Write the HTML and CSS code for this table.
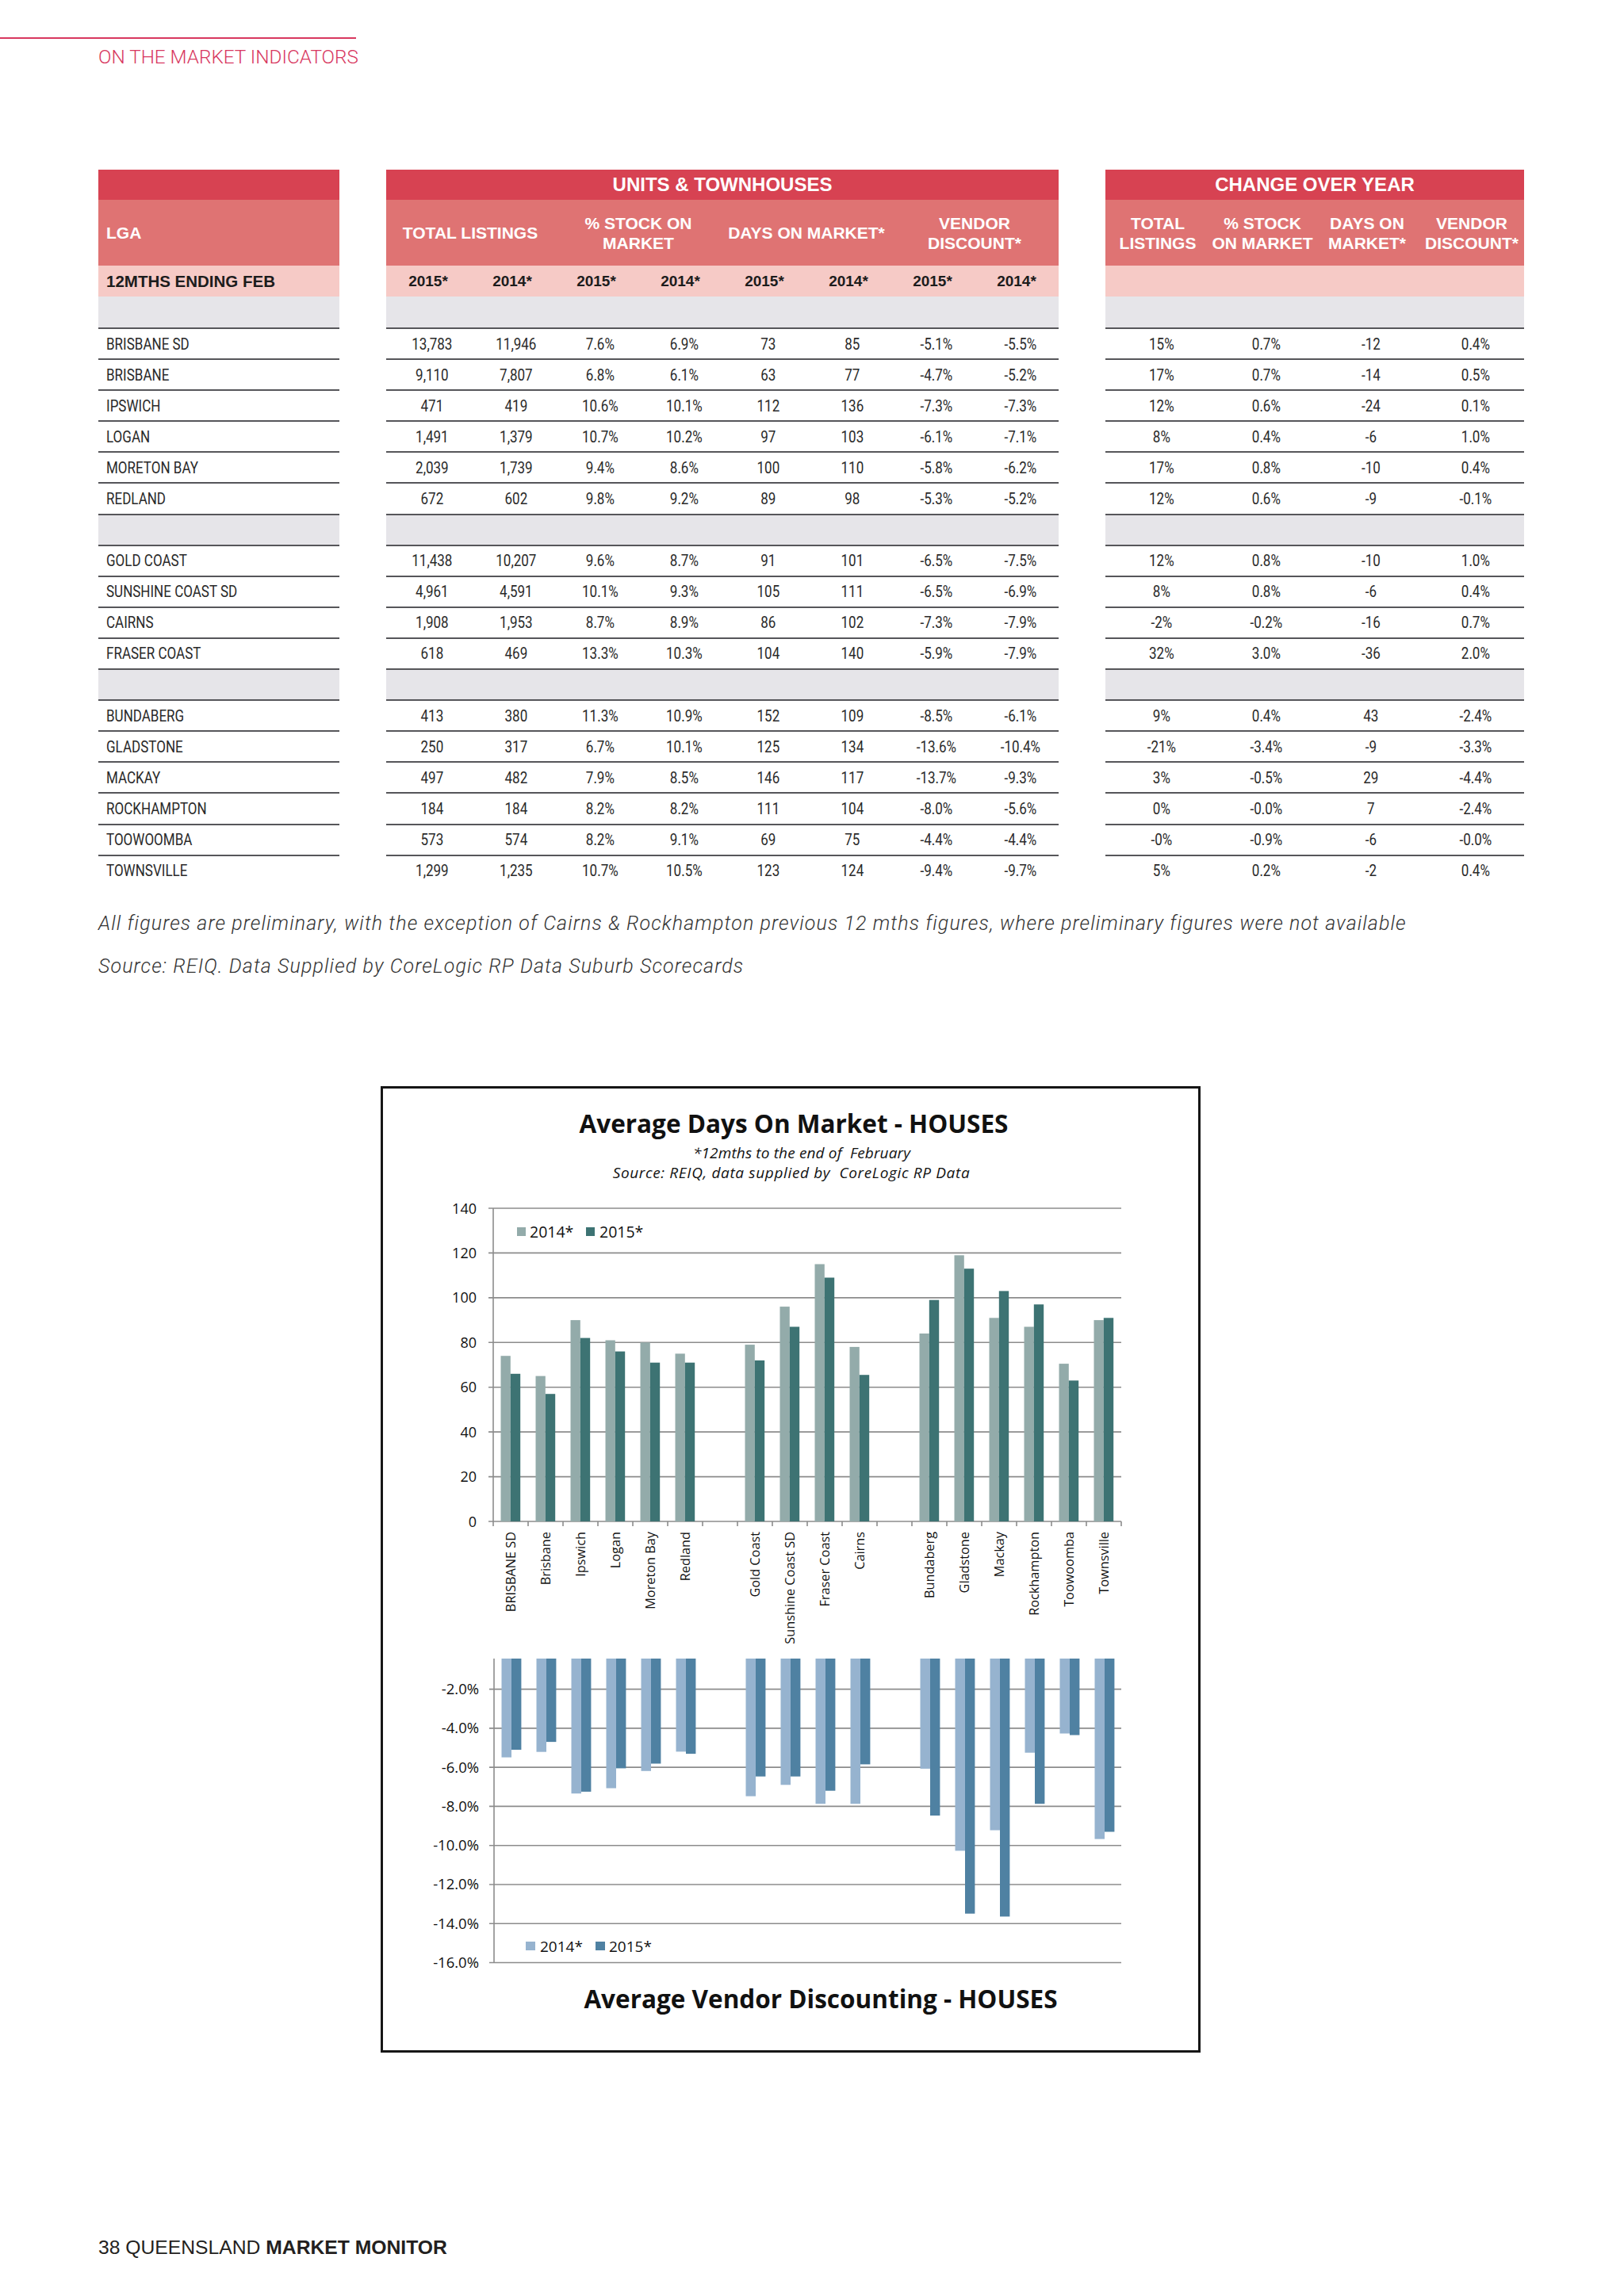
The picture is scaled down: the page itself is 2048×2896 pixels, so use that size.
FILE: index.html
```html
<!DOCTYPE html>
<html>
<head>
<meta charset="utf-8">
<title>On the Market Indicators</title>
<link rel="stylesheet" href="styles.css">
</head>
<body>
<div class="page">
  <div class="topline"></div>
  <div class="kicker">ON THE MARKET INDICATORS</div>

  <div class="tables">
    <div class="tbl t-left">
      <div class="band1"></div>
      <div class="band2 lga">LGA</div>
      <div class="band3 lga-sub">12MTHS ENDING FEB</div>
      <div class="band4"></div>
      <div class="row"><span>BRISBANE SD</span></div>
      <div class="row"><span>BRISBANE</span></div>
      <div class="row"><span>IPSWICH</span></div>
      <div class="row"><span>LOGAN</span></div>
      <div class="row"><span>MORETON BAY</span></div>
      <div class="row"><span>REDLAND</span></div>
      <div class="row sep"></div>
      <div class="row"><span>GOLD COAST</span></div>
      <div class="row"><span>SUNSHINE COAST SD</span></div>
      <div class="row"><span>CAIRNS</span></div>
      <div class="row"><span>FRASER COAST</span></div>
      <div class="row sep"></div>
      <div class="row"><span>BUNDABERG</span></div>
      <div class="row"><span>GLADSTONE</span></div>
      <div class="row"><span>MACKAY</span></div>
      <div class="row"><span>ROCKHAMPTON</span></div>
      <div class="row"><span>TOOWOOMBA</span></div>
      <div class="row"><span>TOWNSVILLE</span></div>
    </div>

    <div class="tbl t-mid">
      <div class="band1">UNITS &amp; TOWNHOUSES</div>
      <div class="band2 cols4"><div>TOTAL LISTINGS</div><div>% STOCK ON<br>MARKET</div><div>DAYS ON MARKET*</div><div>VENDOR<br>DISCOUNT*</div></div>
      <div class="band3 cols8 years"><span>2015*</span><span>2014*</span><span>2015*</span><span>2014*</span><span>2015*</span><span>2014*</span><span>2015*</span><span>2014*</span></div>
      <div class="band4"></div>
      <div class="row cols8"><span>13,783</span><span>11,946</span><span>7.6%</span><span>6.9%</span><span>73</span><span>85</span><span>-5.1%</span><span>-5.5%</span></div>
      <div class="row cols8"><span>9,110</span><span>7,807</span><span>6.8%</span><span>6.1%</span><span>63</span><span>77</span><span>-4.7%</span><span>-5.2%</span></div>
      <div class="row cols8"><span>471</span><span>419</span><span>10.6%</span><span>10.1%</span><span>112</span><span>136</span><span>-7.3%</span><span>-7.3%</span></div>
      <div class="row cols8"><span>1,491</span><span>1,379</span><span>10.7%</span><span>10.2%</span><span>97</span><span>103</span><span>-6.1%</span><span>-7.1%</span></div>
      <div class="row cols8"><span>2,039</span><span>1,739</span><span>9.4%</span><span>8.6%</span><span>100</span><span>110</span><span>-5.8%</span><span>-6.2%</span></div>
      <div class="row cols8"><span>672</span><span>602</span><span>9.8%</span><span>9.2%</span><span>89</span><span>98</span><span>-5.3%</span><span>-5.2%</span></div>
      <div class="row sep"></div>
      <div class="row cols8"><span>11,438</span><span>10,207</span><span>9.6%</span><span>8.7%</span><span>91</span><span>101</span><span>-6.5%</span><span>-7.5%</span></div>
      <div class="row cols8"><span>4,961</span><span>4,591</span><span>10.1%</span><span>9.3%</span><span>105</span><span>111</span><span>-6.5%</span><span>-6.9%</span></div>
      <div class="row cols8"><span>1,908</span><span>1,953</span><span>8.7%</span><span>8.9%</span><span>86</span><span>102</span><span>-7.3%</span><span>-7.9%</span></div>
      <div class="row cols8"><span>618</span><span>469</span><span>13.3%</span><span>10.3%</span><span>104</span><span>140</span><span>-5.9%</span><span>-7.9%</span></div>
      <div class="row sep"></div>
      <div class="row cols8"><span>413</span><span>380</span><span>11.3%</span><span>10.9%</span><span>152</span><span>109</span><span>-8.5%</span><span>-6.1%</span></div>
      <div class="row cols8"><span>250</span><span>317</span><span>6.7%</span><span>10.1%</span><span>125</span><span>134</span><span>-13.6%</span><span>-10.4%</span></div>
      <div class="row cols8"><span>497</span><span>482</span><span>7.9%</span><span>8.5%</span><span>146</span><span>117</span><span>-13.7%</span><span>-9.3%</span></div>
      <div class="row cols8"><span>184</span><span>184</span><span>8.2%</span><span>8.2%</span><span>111</span><span>104</span><span>-8.0%</span><span>-5.6%</span></div>
      <div class="row cols8"><span>573</span><span>574</span><span>8.2%</span><span>9.1%</span><span>69</span><span>75</span><span>-4.4%</span><span>-4.4%</span></div>
      <div class="row cols8"><span>1,299</span><span>1,235</span><span>10.7%</span><span>10.5%</span><span>123</span><span>124</span><span>-9.4%</span><span>-9.7%</span></div>
    </div>

    <div class="tbl t-right">
      <div class="band1">CHANGE OVER YEAR</div>
      <div class="band2 cols4"><div>TOTAL<br>LISTINGS</div><div>% STOCK<br>ON MARKET</div><div>DAYS ON<br>MARKET*</div><div>VENDOR<br>DISCOUNT*</div></div>
      <div class="band3"></div>
      <div class="band4"></div>
      <div class="row cols4"><span>15%</span><span>0.7%</span><span>-12</span><span>0.4%</span></div>
      <div class="row cols4"><span>17%</span><span>0.7%</span><span>-14</span><span>0.5%</span></div>
      <div class="row cols4"><span>12%</span><span>0.6%</span><span>-24</span><span>0.1%</span></div>
      <div class="row cols4"><span>8%</span><span>0.4%</span><span>-6</span><span>1.0%</span></div>
      <div class="row cols4"><span>17%</span><span>0.8%</span><span>-10</span><span>0.4%</span></div>
      <div class="row cols4"><span>12%</span><span>0.6%</span><span>-9</span><span>-0.1%</span></div>
      <div class="row sep"></div>
      <div class="row cols4"><span>12%</span><span>0.8%</span><span>-10</span><span>1.0%</span></div>
      <div class="row cols4"><span>8%</span><span>0.8%</span><span>-6</span><span>0.4%</span></div>
      <div class="row cols4"><span>-2%</span><span>-0.2%</span><span>-16</span><span>0.7%</span></div>
      <div class="row cols4"><span>32%</span><span>3.0%</span><span>-36</span><span>2.0%</span></div>
      <div class="row sep"></div>
      <div class="row cols4"><span>9%</span><span>0.4%</span><span>43</span><span>-2.4%</span></div>
      <div class="row cols4"><span>-21%</span><span>-3.4%</span><span>-9</span><span>-3.3%</span></div>
      <div class="row cols4"><span>3%</span><span>-0.5%</span><span>29</span><span>-4.4%</span></div>
      <div class="row cols4"><span>0%</span><span>-0.0%</span><span>7</span><span>-2.4%</span></div>
      <div class="row cols4"><span>-0%</span><span>-0.9%</span><span>-6</span><span>-0.0%</span></div>
      <div class="row cols4"><span>5%</span><span>0.2%</span><span>-2</span><span>0.4%</span></div>
    </div>
  </div>

  <p class="note first">All figures are preliminary, with the exception of Cairns &amp; Rockhampton previous 12 mths figures, where preliminary figures were not available</p>
  <p class="note">Source: REIQ. Data Supplied by CoreLogic RP Data Suburb Scorecards</p>

  <div class="chart">
    <svg class="chart-svg" width="1028" height="1213" viewBox="0 0 1028 1213" xmlns="http://www.w3.org/2000/svg">
      <g transform="translate(-483,-1373)">
        <!-- Days on market -->
        <text class="c-title" x="1001" y="1429" text-anchor="middle">Average Days On Market - HOUSES</text>
        <text class="c-sub" x="1011" y="1461" text-anchor="middle">*12mths to the end of&#160; February</text>
        <text class="c-sub c-sub2" x="998" y="1486" text-anchor="middle">Source: REIQ, data supplied by&#160; CoreLogic RP Data</text>

        <g class="grid">
          <line x1="616" y1="1524" x2="1414" y2="1524"/>
          <line x1="616" y1="1580.4" x2="1414" y2="1580.4"/>
          <line x1="616" y1="1636.9" x2="1414" y2="1636.9"/>
          <line x1="616" y1="1693.3" x2="1414" y2="1693.3"/>
          <line x1="616" y1="1749.7" x2="1414" y2="1749.7"/>
          <line x1="616" y1="1806.1" x2="1414" y2="1806.1"/>
          <line x1="616" y1="1862.6" x2="1414" y2="1862.6"/>
          <line x1="616" y1="1919" x2="1414" y2="1919"/>
          <line x1="622" y1="1524" x2="622" y2="1925"/>
          <line x1="666" y1="1919" x2="666" y2="1925"/>
          <line x1="710" y1="1919" x2="710" y2="1925"/>
          <line x1="754" y1="1919" x2="754" y2="1925"/>
          <line x1="798" y1="1919" x2="798" y2="1925"/>
          <line x1="842" y1="1919" x2="842" y2="1925"/>
          <line x1="886" y1="1919" x2="886" y2="1925"/>
          <line x1="930" y1="1919" x2="930" y2="1925"/>
          <line x1="974" y1="1919" x2="974" y2="1925"/>
          <line x1="1018" y1="1919" x2="1018" y2="1925"/>
          <line x1="1062" y1="1919" x2="1062" y2="1925"/>
          <line x1="1106" y1="1919" x2="1106" y2="1925"/>
          <line x1="1150" y1="1919" x2="1150" y2="1925"/>
          <line x1="1194" y1="1919" x2="1194" y2="1925"/>
          <line x1="1238" y1="1919" x2="1238" y2="1925"/>
          <line x1="1282" y1="1919" x2="1282" y2="1925"/>
          <line x1="1326" y1="1919" x2="1326" y2="1925"/>
          <line x1="1370" y1="1919" x2="1370" y2="1925"/>
          <line x1="1414" y1="1919" x2="1414" y2="1925"/>
        </g>
        <g class="ylab" text-anchor="end">
          <text x="601" y="1530.5">140</text>
          <text x="601" y="1586.9">120</text>
          <text x="601" y="1643.4">100</text>
          <text x="601" y="1699.8">80</text>
          <text x="601" y="1756.2">60</text>
          <text x="601" y="1812.6">40</text>
          <text x="601" y="1869.1">20</text>
          <text x="601" y="1925.5">0</text>
        </g>
        <rect class="d14" x="652" y="1548" width="11" height="11"/>
        <text class="leg" x="668" y="1560.5">2014*</text>
        <rect class="d15" x="739" y="1548" width="11" height="11"/>
        <text class="leg" x="756" y="1560.5">2015*</text>

        <g transform="translate(622,0)"><rect class="d14" x="9.5" y="1710.2" width="12.3" height="208.8"/><rect class="d15" x="21.8" y="1732.8" width="12.4" height="186.2"/></g>
        <g transform="translate(666,0)"><rect class="d14" x="9.5" y="1735.6" width="12.3" height="183.4"/><rect class="d15" x="21.8" y="1758.2" width="12.4" height="160.8"/></g>
        <g transform="translate(710,0)"><rect class="d14" x="9.5" y="1665.1" width="12.3" height="253.9"/><rect class="d15" x="21.8" y="1687.6" width="12.4" height="231.4"/></g>
        <g transform="translate(754,0)"><rect class="d14" x="9.5" y="1690.5" width="12.3" height="228.5"/><rect class="d15" x="21.8" y="1704.6" width="12.4" height="214.4"/></g>
        <g transform="translate(798,0)"><rect class="d14" x="9.5" y="1693.3" width="12.3" height="225.7"/><rect class="d15" x="21.8" y="1718.7" width="12.4" height="200.3"/></g>
        <g transform="translate(842,0)"><rect class="d14" x="9.5" y="1707.4" width="12.3" height="211.6"/><rect class="d15" x="21.8" y="1718.7" width="12.4" height="200.3"/></g>
        <g transform="translate(930,0)"><rect class="d14" x="9.5" y="1696.1" width="12.3" height="222.9"/><rect class="d15" x="21.8" y="1715.9" width="12.4" height="203.1"/></g>
        <g transform="translate(974,0)"><rect class="d14" x="9.5" y="1648.1" width="12.3" height="270.9"/><rect class="d15" x="21.8" y="1673.5" width="12.4" height="245.5"/></g>
        <g transform="translate(1018,0)"><rect class="d14" x="9.5" y="1594.5" width="12.3" height="324.5"/><rect class="d15" x="21.8" y="1611.5" width="12.4" height="307.5"/></g>
        <g transform="translate(1062,0)"><rect class="d14" x="9.5" y="1698.9" width="12.3" height="220.1"/><rect class="d15" x="21.8" y="1734.2" width="12.4" height="184.8"/></g>
        <g transform="translate(1150,0)"><rect class="d14" x="9.5" y="1682.0" width="12.3" height="237.0"/><rect class="d15" x="21.8" y="1639.7" width="12.4" height="279.3"/></g>
        <g transform="translate(1194,0)"><rect class="d14" x="9.5" y="1583.3" width="12.3" height="335.7"/><rect class="d15" x="21.8" y="1600.2" width="12.4" height="318.8"/></g>
        <g transform="translate(1238,0)"><rect class="d14" x="9.5" y="1662.3" width="12.3" height="256.7"/><rect class="d15" x="21.8" y="1628.4" width="12.4" height="290.6"/></g>
        <g transform="translate(1282,0)"><rect class="d14" x="9.5" y="1673.5" width="12.3" height="245.5"/><rect class="d15" x="21.8" y="1645.3" width="12.4" height="273.7"/></g>
        <g transform="translate(1326,0)"><rect class="d14" x="9.5" y="1720.1" width="12.3" height="198.9"/><rect class="d15" x="21.8" y="1741.3" width="12.4" height="177.7"/></g>
        <g transform="translate(1370,0)"><rect class="d14" x="9.5" y="1665.1" width="12.3" height="253.9"/><rect class="d15" x="21.8" y="1662.3" width="12.4" height="256.7"/></g>

        <g class="xlab" text-anchor="end">
          <text transform="translate(650,1932) rotate(-90)">BRISBANE SD</text>
          <text transform="translate(694,1932) rotate(-90)">Brisbane</text>
          <text transform="translate(738,1932) rotate(-90)">Ipswich</text>
          <text transform="translate(782,1932) rotate(-90)">Logan</text>
          <text transform="translate(826,1932) rotate(-90)">Moreton Bay</text>
          <text transform="translate(870,1932) rotate(-90)">Redland</text>
          <text transform="translate(958,1932) rotate(-90)">Gold Coast</text>
          <text transform="translate(1002,1932) rotate(-90)">Sunshine Coast SD</text>
          <text transform="translate(1046,1932) rotate(-90)">Fraser Coast</text>
          <text transform="translate(1090,1932) rotate(-90)">Cairns</text>
          <text transform="translate(1178,1932) rotate(-90)">Bundaberg</text>
          <text transform="translate(1222,1932) rotate(-90)">Gladstone</text>
          <text transform="translate(1266,1932) rotate(-90)">Mackay</text>
          <text transform="translate(1310,1932) rotate(-90)">Rockhampton</text>
          <text transform="translate(1354,1932) rotate(-90)">Toowoomba</text>
          <text transform="translate(1398,1932) rotate(-90)">Townsville</text>
        </g>

        <!-- Vendor discounting -->
        <g class="grid">
          <line x1="617" y1="2130.6" x2="1414" y2="2130.6"/>
          <line x1="617" y1="2179.9" x2="1414" y2="2179.9"/>
          <line x1="617" y1="2229.1" x2="1414" y2="2229.1"/>
          <line x1="617" y1="2278.4" x2="1414" y2="2278.4"/>
          <line x1="617" y1="2327.7" x2="1414" y2="2327.7"/>
          <line x1="617" y1="2377.0" x2="1414" y2="2377.0"/>
          <line x1="617" y1="2426.2" x2="1414" y2="2426.2"/>
          <line x1="617" y1="2475.5" x2="1414" y2="2475.5"/>
          <line x1="623" y1="2092" x2="623" y2="2475.5"/>
        </g>
        <g class="ylab2" text-anchor="end">
          <text x="604" y="2137">-2.0%</text>
          <text x="604" y="2186.3">-4.0%</text>
          <text x="604" y="2235.5">-6.0%</text>
          <text x="604" y="2284.8">-8.0%</text>
          <text x="604" y="2334.1">-10.0%</text>
          <text x="604" y="2383.4">-12.0%</text>
          <text x="604" y="2432.6">-14.0%</text>
          <text x="604" y="2481.9">-16.0%</text>
        </g>

        <g transform="translate(623,2092)"><rect class="v14" x="9.5" y="0" width="12.5" height="124.6"/><rect class="v15" x="22" y="0" width="12.4" height="115.0"/></g>
        <g transform="translate(667,2092)"><rect class="v14" x="9.5" y="0" width="12.5" height="117.7"/><rect class="v15" x="22" y="0" width="12.4" height="105.1"/></g>
        <g transform="translate(711,2092)"><rect class="v14" x="9.5" y="0" width="12.5" height="170.2"/><rect class="v15" x="22" y="0" width="12.4" height="167.9"/></g>
        <g transform="translate(755,2092)"><rect class="v14" x="9.5" y="0" width="12.5" height="163.5"/><rect class="v15" x="22" y="0" width="12.4" height="138.4"/></g>
        <g transform="translate(799,2092)"><rect class="v14" x="9.5" y="0" width="12.5" height="141.8"/><rect class="v15" x="22" y="0" width="12.4" height="132.5"/></g>
        <g transform="translate(843,2092)"><rect class="v14" x="9.5" y="0" width="12.5" height="117.4"/><rect class="v15" x="22" y="0" width="12.4" height="120.1"/></g>
        <g transform="translate(931,2092)"><rect class="v14" x="9.5" y="0" width="12.5" height="173.6"/><rect class="v15" x="22" y="0" width="12.4" height="148.7"/></g>
        <g transform="translate(975,2092)"><rect class="v14" x="9.5" y="0" width="12.5" height="159.3"/><rect class="v15" x="22" y="0" width="12.4" height="148.7"/></g>
        <g transform="translate(1019,2092)"><rect class="v14" x="9.5" y="0" width="12.5" height="183.2"/><rect class="v15" x="22" y="0" width="12.4" height="166.7"/></g>
        <g transform="translate(1063,2092)"><rect class="v14" x="9.5" y="0" width="12.5" height="183.2"/><rect class="v15" x="22" y="0" width="12.4" height="133.4"/></g>
        <g transform="translate(1151,2092)"><rect class="v14" x="9.5" y="0" width="12.5" height="138.9"/><rect class="v15" x="22" y="0" width="12.4" height="198.0"/></g>
        <g transform="translate(1195,2092)"><rect class="v14" x="9.5" y="0" width="12.5" height="242.4"/><rect class="v15" x="22" y="0" width="12.4" height="321.7"/></g>
        <g transform="translate(1239,2092)"><rect class="v14" x="9.5" y="0" width="12.5" height="216.5"/><rect class="v15" x="22" y="0" width="12.4" height="325.4"/></g>
        <g transform="translate(1283,2092)"><rect class="v14" x="9.5" y="0" width="12.5" height="118.7"/><rect class="v15" x="22" y="0" width="12.4" height="183.2"/></g>
        <g transform="translate(1327,2092)"><rect class="v14" x="9.5" y="0" width="12.5" height="94.5"/><rect class="v15" x="22" y="0" width="12.4" height="96.5"/></g>
        <g transform="translate(1371,2092)"><rect class="v14" x="9.5" y="0" width="12.5" height="227.6"/><rect class="v15" x="22" y="0" width="12.4" height="218.5"/></g>

        <rect class="v14" x="663" y="2449" width="12" height="11"/>
        <text class="leg2" x="681" y="2461.5">2014*</text>
        <rect class="v15" x="751" y="2449" width="12" height="11"/>
        <text class="leg2" x="768" y="2461.5">2015*</text>

        <text class="c-title" x="1035" y="2533" text-anchor="middle">Average Vendor Discounting - HOUSES</text>
      </g>
    </svg>
  </div>

  <div class="footer">38 QUEENSLAND <b>MARKET MONITOR</b></div>
</div>
</body>
</html>
```

FILE: styles.css
```css
* {
  box-sizing: border-box;
  margin: 0;
  padding: 0;
}

body {
  width: 2048px;
  background: #ffffff;
  font-family: "Liberation Sans", Arial, sans-serif;
  color: #231f20;
}

.page {
  width: 2048px;
  height: 2896px;
  overflow: hidden;
}

.topline {
  width: 449px;
  height: 2px;
  margin-top: 47px;
  background: #d8385f;
}

.kicker {
  margin: 8px 0 0 124px;
  font-family: Roboto, "Liberation Sans", sans-serif;
  font-weight: 300;
  font-size: 24.3px;
  line-height: 30px;
  color: #d8385f;
}

/* ---------- tables ---------- */
.tables {
  display: flex;
  gap: 59px;
  margin: 127px 0 0 124px;
}

.tbl {
  display: flex;
  flex-direction: column;
}

.t-left { width: 304px; }
.t-mid { width: 848px; }
.t-right { width: 528px; }

.band1 {
  height: 38px;
  background: #d74252;
  color: #ffffff;
  font-weight: 700;
  font-size: 24px;
  display: flex;
  align-items: center;
  justify-content: center;
}

.band2 {
  height: 83px;
  background: #df7373;
  color: #ffffff;
  font-weight: 700;
  font-size: 21px;
  line-height: 25px;
  align-items: center;
  text-align: center;
}

.band3 {
  height: 39px;
  background: #f6cac6;
  align-items: center;
}

.band4 {
  height: 39px;
  background: #e6e5e9;
}

.lga {
  display: flex;
  align-items: center;
  padding-left: 10px;
  text-align: left;
}

.lga-sub {
  display: flex;
  padding-left: 10px;
  font-weight: 700;
  font-size: 20.5px;
  color: #1c1c1c;
}

.cols4 {
  display: grid;
  grid-template-columns: repeat(4, 1fr);
}

.cols8 {
  display: grid;
  grid-template-columns: repeat(8, 1fr);
}

.years {
  font-weight: 700;
  font-size: 19px;
  color: #1c1c1c;
  text-align: center;
}

.row {
  height: 39.1px;
  border-top: 2px solid #56565a;
  align-items: center;
  display: flex;
  padding-left: 10px;
  font-family: Roboto, "Liberation Sans", sans-serif;
  font-weight: 400;
  font-size: 21px;
  color: #2a2a2a;
}

.row span {
  display: inline-block;
  transform: scaleX(0.81);
  transform-origin: left center;
  white-space: nowrap;
}

.row.cols4,
.row.cols8 {
  display: grid;
  padding-left: 0;
  text-align: center;
}

.row.cols4 span,
.row.cols8 span {
  padding-left: 12px;
  transform-origin: center center;
}

.row.sep {
  background: #e6e5e9;
}

/* ---------- notes ---------- */
.note {
  margin: 24px 0 0 124px;
  font-family: Roboto, "Liberation Sans", sans-serif;
  font-style: italic;
  font-weight: 300;
  font-size: 25px;
  letter-spacing: 1.1px;
  line-height: 30px;
  color: #333333;
}

.note.first {
  margin-top: 33px;
}

/* ---------- chart ---------- */
.chart {
  width: 1034px;
  height: 1219px;
  margin: 136px 0 0 480px;
  border: 3px solid #161616;
}

.chart-svg {
  display: block;
  font-family: "Open Sans", sans-serif;
}

.c-title {
  font-size: 31.5px;
  font-weight: 700;
  fill: #111111;
}

.c-sub {
  font-size: 19px;
  font-style: italic;
  fill: #111111;
  white-space: pre;
  letter-spacing: 0.15px;
}

.c-sub2 {
  letter-spacing: 0.65px;
}

.grid line {
  stroke: #8c8c8c;
  stroke-width: 1.6;
}

.ylab text {
  font-size: 18px;
  fill: #111111;
}

.ylab2 text {
  font-size: 18.5px;
  fill: #111111;
}

.xlab text {
  font-size: 16.3px;
  fill: #111111;
}

.leg {
  font-size: 19.5px;
  fill: #111111;
}

.leg2 {
  font-size: 19px;
  fill: #111111;
}

.d14 { fill: #93abaa; }
.d15 { fill: #3d7373; }
.v14 { fill: #96b3cf; }
.v15 { fill: #4f81a2; }

/* ---------- footer ---------- */
.footer {
  margin: 231px 0 0 124px;
  font-size: 24.7px;
  line-height: 30px;
  color: #231f20;
}

.footer b {
  font-weight: 700;
}
```
